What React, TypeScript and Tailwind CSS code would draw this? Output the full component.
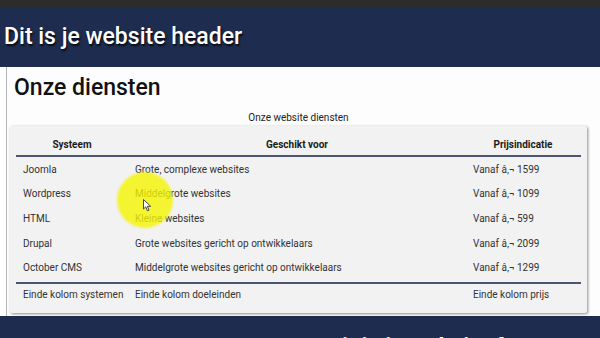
const rows = [
  { system: "Joomla", use: "Grote, complexe websites", price: "Vanaf â‚¬ 1599" },
  { system: "Wordpress", use: "Middelgrote websites", price: "Vanaf â‚¬ 1099" },
  { system: "HTML", use: "Kleine websites", price: "Vanaf â‚¬ 599" },
  { system: "Drupal", use: "Grote websites gericht op ontwikkelaars", price: "Vanaf â‚¬ 2099" },
  { system: "October CMS", use: "Middelgrote websites gericht op ontwikkelaars", price: "Vanaf â‚¬ 1299" },
];

function Cursor() {
  return (
    <svg width="9" height="13" viewBox="0 0 9 13" className="absolute left-[143px] top-[199px]">
      <path d="M0.5 0.5 L0.5 10 L2.8 7.8 L4.4 11.8 L6 11.1 L4.4 7.3 L7.6 7.3 Z" fill="#ffffff" stroke="#333" strokeWidth="0.9" strokeLinejoin="round" />
    </svg>
  );
}

export default function App() {
  return (
    <div className="relative w-[600px] h-[338px] overflow-hidden bg-white font-['Roboto',sans-serif]">
      <div className="h-[8px] bg-[#2c2c2c]" />
      <header className="h-[59px] bg-[#1e2d4f] flex items-center pl-[4px] pb-[1px]">
        <h1 className="text-[23px] font-medium text-white [text-shadow:1px_2px_2px_rgba(0,0,0,0.8)]">
          Dit is je website header
        </h1>
      </header>

      <main className="h-[249px] ml-[6px] border-l border-[#b5b5b5] bg-[#fdfdfd]">
        <h2 className="pl-[7px] pt-[8px] text-[23px] leading-[26px] font-medium text-[#111]">Onze diensten</h2>
        <div className="mt-[11px] ml-[3px] w-[577px]">
          <p className="text-center text-[10px] leading-[12px] text-[#222]">Onze website diensten</p>
          <div className="mt-[2px] bg-[#f2f2f2] px-[6px] pt-[4px] pb-[7px] rounded-[2px] shadow-[1px_1px_3px_rgba(0,0,0,0.45)]">
            <div className="grid grid-cols-[112px_338px_114px] text-[10px] leading-[14px] font-bold text-[#1a1a1a] border-b-2 border-[#4b5772]">
              <div className="pt-[8px] pb-[3px] text-center">Systeem</div>
              <div className="pt-[8px] pb-[3px] text-center">Geschikt voor</div>
              <div className="pt-[8px] pb-[3px] text-center">Prijsindicatie</div>
            </div>
            <div className="pb-[2px]">
              {rows.map((r) => (
                <div key={r.system} className="grid grid-cols-[112px_338px_114px] h-[24.6px] items-center text-[10px] text-[#333]">
                  <div className="px-[7px]">{r.system}</div>
                  <div className="px-[7px]">{r.use}</div>
                  <div className="px-[7px]">{r.price}</div>
                </div>
              ))}
            </div>
            <div className="grid grid-cols-[112px_338px_114px] h-[24px] items-center text-[10px] text-[#333] border-t-2 border-[#4b5772]">
              <div className="px-[7px] whitespace-nowrap">Einde kolom systemen</div>
              <div className="px-[7px]">Einde kolom doeleinden</div>
              <div className="px-[7px]">Einde kolom prijs</div>
            </div>
          </div>
        </div>
      </main>

      <footer className="h-[22px] bg-[#1e2d4f] pl-[327px] pt-[19px]">
        <p className="text-[23px] leading-[26px] font-bold text-white whitespace-nowrap">Dit is je website footer</p>
      </footer>

      <div className="absolute left-[117px] top-[172px] w-[56px] h-[56px] rounded-full bg-[#f4f400]/80 blur-[1px]" />
      <Cursor />
    </div>
  );
}
